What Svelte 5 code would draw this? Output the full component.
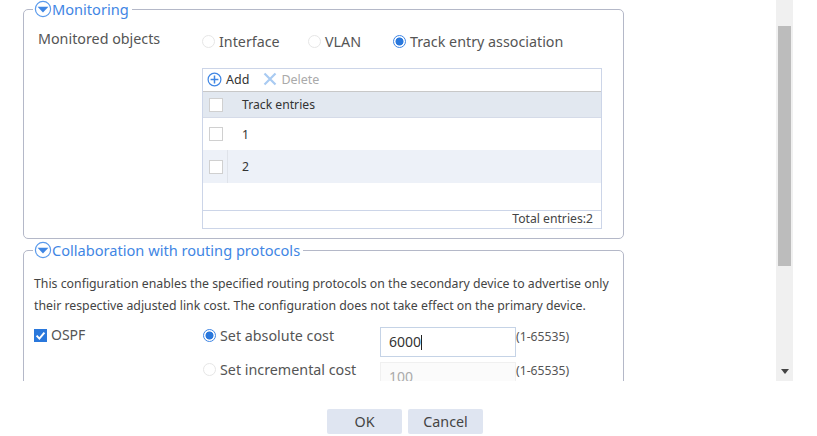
<script lang="ts">
	const rows = [
		{ id: '1', alt: false },
		{ id: '2', alt: true }
	];
	let modes = ['Interface', 'VLAN', 'Track entry association'];
	let selected = 'Track entry association';
</script>

{#snippet toggle()}
	<svg class="toggle" width="18" height="18" viewBox="0 0 18 18">
		<circle cx="9" cy="9" r="7.6" fill="#fff" stroke="#5b9bec" stroke-width="1.2" />
		<path d="M3.6 6.8h10.8L9 12.6z" fill="#3f86e4" />
	</svg>
{/snippet}

<div class="page">
	<div class="body">
		<div class="content">
			<section class="group first">
				<div class="legend">{@render toggle()}<span>Monitoring</span></div>
				<div class="objects">
					<span class="objects-label">Monitored objects</span>
					<div class="modes">
						{#each modes as m}
							<label class="radio-item">
								<span class="radio" class:on={m === selected}></span>{m}
							</label>
						{/each}
					</div>
				</div>
				<div class="table">
					<div class="toolbar">
						<span class="tool">
							<svg width="15" height="15" viewBox="0 0 15 15">
								<circle cx="7.5" cy="7.5" r="6.4" fill="none" stroke="#3f86e4" stroke-width="1.2" />
								<path d="M7.5 3.6v7.8M3.6 7.5h7.8" stroke="#3f86e4" stroke-width="1.5" />
							</svg>
							Add
						</span>
						<span class="tool disabled">
							<svg width="14" height="14" viewBox="0 0 14 14">
								<path d="M1.5 1.5l11 11M12.5 1.5l-11 11" stroke="#a9cbf2" stroke-width="2.2" />
							</svg>
							Delete
						</span>
					</div>
					<div class="thead">
						<span class="check-cell"><span class="box"></span></span>
						<span class="cell">Track entries</span>
					</div>
					{#each rows as row}
						<div class="trow" class:alt={row.alt}>
							<span class="check-cell"><span class="box"></span></span>
							<span class="cell">{row.id}</span>
						</div>
					{/each}
					<div class="spacer"></div>
					<div class="tfoot">Total entries:2</div>
				</div>
			</section>

			<section class="group second">
				<div class="legend">{@render toggle()}<span>Collaboration with routing protocols</span></div>
				<p class="note">This configuration enables the specified routing protocols on the secondary device to advertise only their respective adjusted link cost. The configuration does not take effect on the primary device.</p>
				<div class="ospf">
					<label class="ospf-check">
						<span class="checked">
							<svg width="13" height="13" viewBox="0 0 13 13">
								<path d="M2.6 6.6l2.8 3 5-6" fill="none" stroke="#fff" stroke-width="2" />
							</svg>
						</span>
						OSPF
					</label>
					<div class="costs">
						<div class="cost">
							<label class="radio-item tight"><span class="radio on"></span>Set absolute cost</label>
							<span class="input active">6000<i class="caret"></i></span>
							<span class="range">(1-65535)</span>
						</div>
						<div class="cost">
							<label class="radio-item tight"><span class="radio"></span>Set incremental cost</label>
							<span class="input off">100</span>
							<span class="range">(1-65535)</span>
						</div>
					</div>
				</div>
			</section>
		</div>
		<div class="scrollbar">
			<div class="thumb"></div>
			<svg class="arrow" width="8" height="5" viewBox="0 0 8 5"><path d="M0 0h8L4 5z" fill="#444" /></svg>
		</div>
	</div>
	<div class="footer">
		<button>OK</button>
		<button>Cancel</button>
	</div>
</div>

<style>
	:global(body) {
		margin: 0;
		background: #fff;
	}

	.page {
		width: 817px;
		height: 436px;
		overflow: hidden;
		font-family: "Noto Sans", "Open Sans", sans-serif;
		color: #444;
		font-size: 14.3px;
	}

	.body {
		display: flex;
		height: 381px;
	}

	.content {
		width: 776px;
		height: 381px;
		overflow: hidden;
		padding: 9px 0 0 23px;
		box-sizing: border-box;
	}

	.group {
		position: relative;
		width: 601px;
		box-sizing: border-box;
		border: 1px solid #b4b8c8;
		border-radius: 5px;
	}

	.first {
		height: 230px;
		margin-bottom: 11px;
	}

	.second {
		height: 160px;
	}

	.legend {
		position: absolute;
		top: -9px;
		left: 9px;
		display: flex;
		align-items: center;
		gap: 0;
		height: 16px;
		padding: 0 3px 0 1px;
		background: #fff;
		color: #3f86e4;
		font-size: 14.6px;
		line-height: 16px;
	}

	.objects {
		display: flex;
		padding: 19px 0 0 14px;
		height: 39px;
	}

	.objects-label {
		width: 164px;
		line-height: 20px;
		color: #555;
	}

	.modes {
		display: grid;
		grid-template-columns: 106px 85px auto;
		height: 20px;
		padding-top: 2px;
	}

	.radio-item {
		display: flex;
		align-items: center;
		gap: 4px;
		height: 20px;
		color: #555;
	}

	.radio {
		display: inline-block;
		box-sizing: border-box;
		width: 13px;
		height: 13px;
		border: 1px solid #e6e6e6;
		border-radius: 50%;
		background: #fff;
	}

	.radio.on {
		border: 1px solid #3f86e4;
		background: radial-gradient(circle, #2a78dc 0 3.6px, #fff 4.4px);
	}

	.table {
		width: 400px;
		height: 161px;
		margin: 0 0 0 178px;
		box-sizing: border-box;
		border: 1px solid #ccd5e8;
		display: flex;
		flex-direction: column;
		font-size: 12.2px;
	}

	.toolbar {
		display: flex;
		align-items: center;
		gap: 14px;
		height: 22px;
		padding: 0 0 2px 4px;
		box-sizing: border-box;
		flex: none;
		color: #333;
		font-size: 12.5px;
	}

	.tool {
		display: flex;
		align-items: center;
		gap: 4px;
	}

	.tool.disabled {
		color: #aaa;
	}

	.thead, .trow {
		display: flex;
		align-items: center;
		flex: none;
		color: #333;
	}

	.thead {
		height: 27px;
		background: #e2e8f0;
		border-top: 1px solid #c8c8c8;
		border-bottom: 1px solid #d5dbe8;
		box-sizing: border-box;
	}

	.trow {
		height: 32px;
	}

	.trow.alt {
		height: 33px;
		background: #edf1f8;
	}

	.trow.alt .check-cell {
		border-right: 1px solid #dfe3ea;
		width: 18px;
		height: 100%;
	}

	.check-cell {
		display: flex;
		align-items: center;
		width: 19px;
		padding-left: 6px;
		margin-right: 14px;
	}

	.box {
		display: block;
		box-sizing: border-box;
		width: 14px;
		height: 14px;
		background: #fff;
		border: 1px solid #d0d0d0;
	}

	.spacer {
		flex: 1;
	}

	.tfoot {
		height: 17px;
		flex: none;
		border-top: 1px solid #ccd5e8;
		text-align: right;
		padding-right: 8px;
		line-height: 16px;
		color: #444;
	}

	.note {
		margin: 0;
		padding: 22px 10px 0;
		font-size: 12.3px;
		line-height: 22px;
		color: #444;
	}

	.ospf {
		display: flex;
		padding: 8px 0 0 10px;
	}

	.ospf-check {
		display: flex;
		align-items: flex-start;
		gap: 4px;
		width: 169px;
		height: 20px;
		line-height: 20px;
		color: #555;
		font-size: 14px;
	}

	.checked {
		display: flex;
		align-items: center;
		justify-content: center;
		width: 13px;
		height: 13px;
		margin-top: 4px;
		background: #2a78dc;
	}

	.costs {
		display: flex;
		flex-direction: column;
		gap: 4px;
	}

	.cost {
		display: flex;
		height: 30px;
	}

	.tight {
		width: 177px;
	}

	.input {
		display: block;
		box-sizing: border-box;
		width: 136px;
		height: 30px;
		margin-top: 2px;
		padding: 4px 8px 0;
		line-height: 20px;
		font-size: 14px;
	}

	.input.active {
		border: 1px solid #c5d3e6;
		color: #333;
	}

	.input.off {
		margin-top: 3px;
		border: 1px solid #f0f0f0;
		background: #fbfbfb;
		color: #aaa;
	}

	.caret {
		display: inline-block;
		width: 1px;
		height: 15px;
		background: #222;
		vertical-align: -3px;
	}

	.range {
		margin-top: 3px;
		font-size: 12.2px;
		line-height: 18px;
		color: #555;
	}

	.scrollbar {
		position: relative;
		width: 17px;
		height: 381px;
		background: #f0f0f0;
	}

	.thumb {
		position: absolute;
		top: 26px;
		left: 2px;
		width: 13px;
		height: 240px;
		background: #bcbcbc;
	}

	.arrow {
		position: absolute;
		top: 369px;
		left: 5px;
	}

	.footer {
		display: flex;
		justify-content: center;
		gap: 6px;
		width: 810px;
		padding-top: 28px;
	}

	button {
		width: 75px;
		height: 25px;
		border: none;
		border-radius: 2px;
		background: #dfe5f1;
		color: #444;
		font: inherit;
		padding: 0;
	}
</style>
